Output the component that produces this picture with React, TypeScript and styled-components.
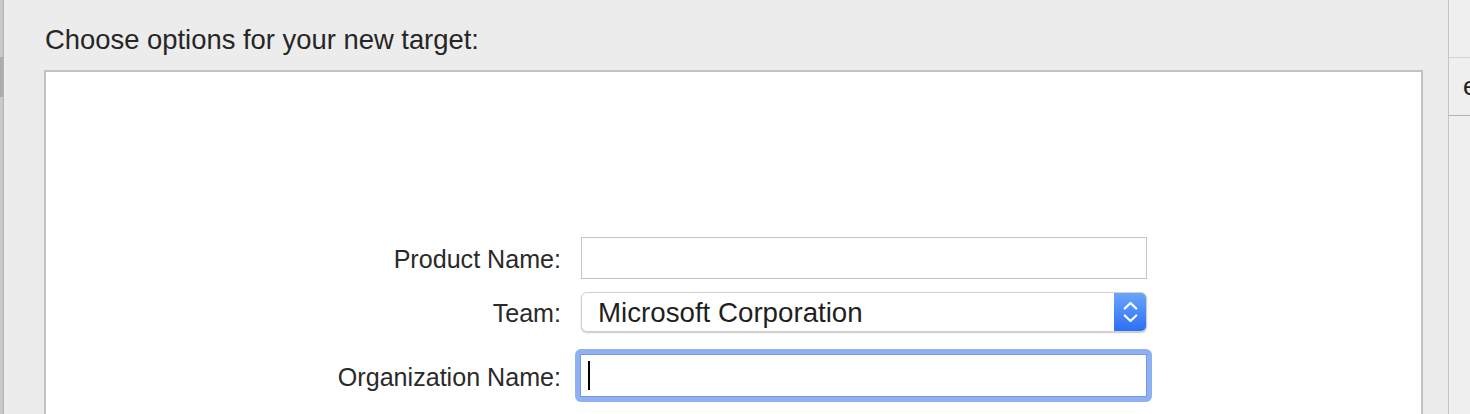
import React from "react";
import styled, { createGlobalStyle } from "styled-components";

const GlobalStyle = createGlobalStyle`
  html, body {
    margin: 0;
    padding: 0;
    background: #ececec;
    overflow: hidden;
  }
  body {
    font-family: "Liberation Sans", Arial, sans-serif;
    color: #262626;
  }
`;

const fields = [
  { label: "Product Name:", kind: "text" as const },
  { label: "Team:", kind: "popup" as const, value: "Microsoft Corporation" },
  { label: "Organization Name:", kind: "focused" as const },
];

const App: React.FC = () => {
  return (
    <>
      <GlobalStyle />
      <Page>
        <LeftEdge>
          <EdgeThumb />
        </LeftEdge>
        <Dialog>
          <Heading>Choose options for your new target:</Heading>
          <OptionsBox>
            <Form>
              {fields.map((f) => (
                <Row key={f.label} $kind={f.kind}>
                  <Label>{f.label}</Label>
                  {f.kind === "text" && <TextField />}
                  {f.kind === "popup" && (
                    <Popup>
                      <PopupValue>{f.value}</PopupValue>
                      <Stepper>
                        <svg width="15" height="24" viewBox="0 0 15 24">
                          <path
                            d="M1.75 8.5 L7.5 3 L13.25 8.5 M1.75 15.5 L7.5 21 L13.25 15.5"
                            fill="none"
                            stroke="#fff"
                            strokeWidth="2.2"
                            strokeLinecap="round"
                            strokeLinejoin="round"
                          />
                        </svg>
                      </Stepper>
                    </Popup>
                  )}
                  {f.kind === "focused" && (
                    <FocusRing>
                      <FocusedField>
                        <Caret />
                      </FocusedField>
                    </FocusRing>
                  )}
                </Row>
              ))}
            </Form>
          </OptionsBox>
        </Dialog>
        <RightPane>
          <PaneRow>e</PaneRow>
        </RightPane>
      </Page>
    </>
  );
};

const Page = styled.div`
  display: flex;
  width: 1470px;
  height: 414px;
  overflow: hidden;
`;

const LeftEdge = styled.div`
  width: 3px;
  background: #c9c9c9;
  border-right: 1px solid #b4b4b4;
  padding-top: 57px;
`;

const EdgeThumb = styled.div`
  height: 40px;
  background: #acacac;
`;

const Dialog = styled.div`
  flex: 1;
  display: flex;
  flex-direction: column;
  padding: 24px 25px 0 40px;
  background: #ececec;
  border-right: 1px solid #c4c4c4;
`;

const Heading = styled.div`
  font-size: 27.4px;
  line-height: 32px;
  margin-left: 1px;
  color: #262626;
`;

const OptionsBox = styled.div`
  flex: 1;
  margin-top: 14px;
  background: #fff;
  border: 2px solid #c2c2c2;
  border-bottom: none;
  padding-top: 165px;
`;

const Form = styled.div`
  display: flex;
  flex-direction: column;
`;

const Row = styled.div<{ $kind: "text" | "popup" | "focused" }>`
  display: grid;
  grid-template-columns: 515px 566px;
  column-gap: 20px;
  align-items: center;
  margin-top: ${(p) =>
    p.$kind === "popup" ? "13px" : p.$kind === "focused" ? "17px" : "0"};
`;

const Label = styled.div`
  text-align: right;
  font-size: 25.1px;
  color: #2a2a2a;
  padding-top: 3px;
`;

const TextField = styled.div`
  height: 40px;
  background: #fff;
  border: 1px solid #c4c4c4;
`;

const Popup = styled.div`
  display: flex;
  height: 38px;
  background: #fff;
  border: 1px solid #cfcfcf;
  border-radius: 6px;
  box-shadow: 0 1px 1.5px rgba(0, 0, 0, 0.22);
  overflow: hidden;
`;

const PopupValue = styled.div`
  flex: 1;
  display: flex;
  align-items: center;
  padding-left: 16px;
  padding-top: 2px;
  font-size: 27.7px;
  color: #1f1f1f;
`;

const Stepper = styled.div`
  width: 32px;
  display: flex;
  align-items: center;
  justify-content: center;
  background: linear-gradient(#6aa4fa, #2d6ff5);
`;

const FocusRing = styled.div`
  box-sizing: border-box;
  width: 577px;
  height: 53px;
  margin-left: -6px;
  padding: 5px;
  background: #8fb0f3;
  border-radius: 6px;
`;

const FocusedField = styled.div`
  box-sizing: border-box;
  height: 43px;
  background: #fff;
  border: 1px solid #7798e2;
  display: flex;
  align-items: center;
  padding-left: 7px;
`;

const Caret = styled.div`
  width: 2px;
  height: 29px;
  background: #000;
`;

const RightPane = styled.div`
  width: 21px;
  background: #efefef;
  padding-top: 57px;
`;

const PaneRow = styled.div`
  height: 57px;
  border-top: 1px solid #d3d3d3;
  border-bottom: 1px solid #b5b5b5;
  font-size: 26px;
  line-height: 56px;
  padding-left: 14px;
  color: #1e1e1e;
`;

export default App;
